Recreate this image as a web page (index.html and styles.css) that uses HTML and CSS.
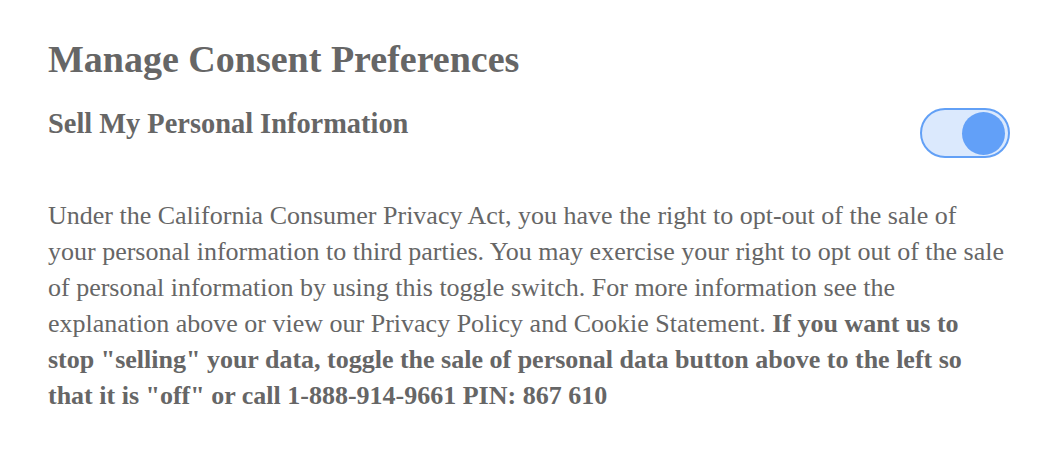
FILE: index.html
```html
<!DOCTYPE html>
<html lang="en">
<head>
<meta charset="utf-8">
<title>Manage Consent Preferences</title>
<link rel="stylesheet" href="styles.css">
</head>
<body>
<main class="panel">
  <h1 class="title">Manage Consent Preferences</h1>
  <div class="row">
    <h2 class="subtitle">Sell My Personal Information</h2>
    <label class="switch" aria-label="Sell My Personal Information">
      <input type="checkbox" class="switch-input" checked>
      <span class="switch-track"><span class="switch-knob"></span></span>
    </label>
  </div>
  <p class="desc">Under the California Consumer Privacy Act, you have the right to opt-out of the sale of your personal information to third parties. You may exercise your right to opt out of the sale of personal information by using this toggle switch. For more information see the explanation above or view our Privacy Policy and Cookie Statement. <strong>If you want us to stop "selling" your data, toggle the sale of personal data button above to the left so that it is "off" or call 1-888-914-9661 PIN: 867 610</strong></p>
</main>
</body>
</html>
```
FILE: styles.css
```css
html, body {
  margin: 0;
  padding: 0;
  background: #ffffff;
}
body {
  font-family: "Liberation Serif", "Times New Roman", serif;
  color: #666666;
}
.panel {
  padding: 37px 48px 0 48px;
}
.title {
  margin: 0;
  font-size: 38px;
  line-height: 44px;
  font-weight: 700;
  color: #666666;
}
.row {
  display: flex;
  justify-content: space-between;
  align-items: flex-start;
  margin-top: 26px;
}
.subtitle {
  margin: 0;
  font-size: 28.4px;
  line-height: 34px;
  font-weight: 700;
  color: #666666;
}
.switch {
  position: relative;
  display: block;
  margin-top: 1px;
}
.switch-input {
  position: absolute;
  opacity: 0;
  width: 0;
  height: 0;
}
.switch-track {
  box-sizing: border-box;
  display: flex;
  justify-content: flex-end;
  align-items: center;
  width: 90px;
  height: 50px;
  padding: 0 3px;
  border: 2px solid #62a0f6;
  border-radius: 25px;
  background: #dbe9fd;
}
.switch-knob {
  display: block;
  width: 43px;
  height: 43px;
  border-radius: 50%;
  background: #62a0f8;
}
.desc {
  max-width: 958px;
  margin: 40px 0 0 0;
  font-size: 26px;
  line-height: 36px;
  color: #666666;
}
.desc strong {
  font-weight: 700;
}
```
